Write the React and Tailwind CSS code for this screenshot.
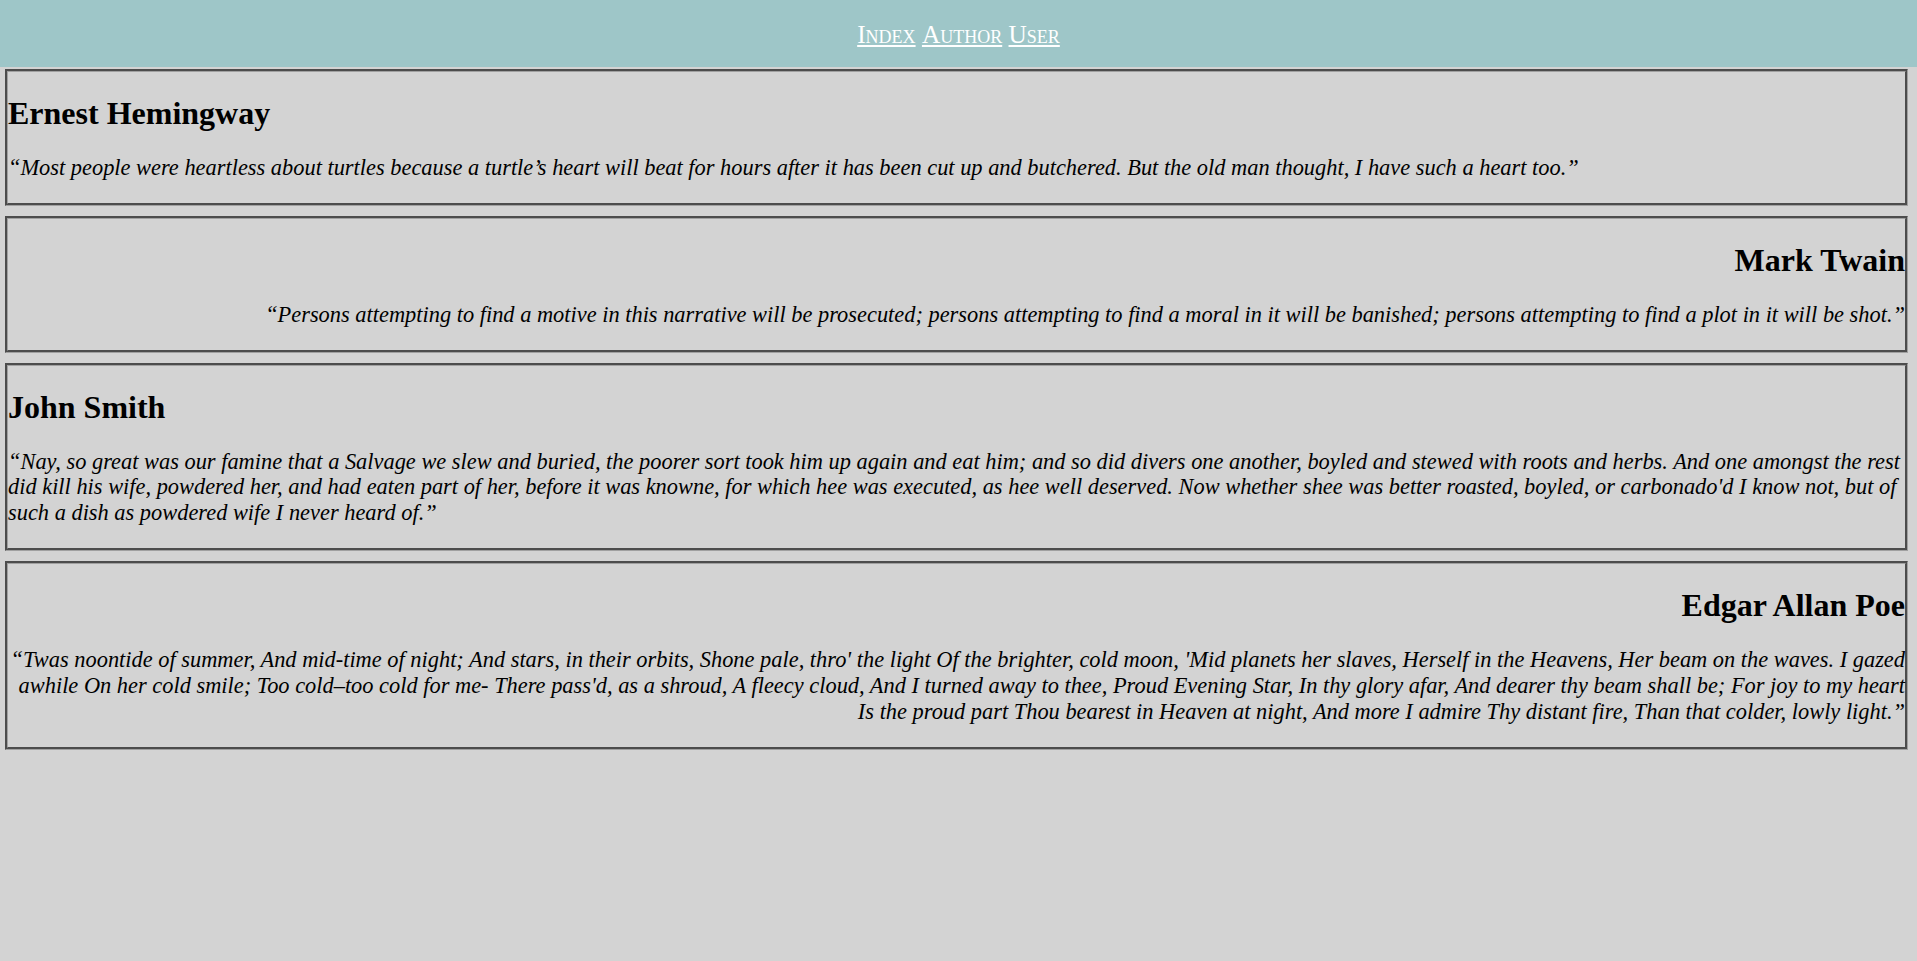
import React from "react";

const quotes = [
  {
    author: "Ernest Hemingway",
    align: "left",
    text: "“Most people were heartless about turtles because a turtle’s heart will beat for hours after it has been cut up and butchered. But the old man thought, I have such a heart too.”",
  },
  {
    author: "Mark Twain",
    align: "right",
    text: "“Persons attempting to find a motive in this narrative will be prosecuted; persons attempting to find a moral in it will be banished; persons attempting to find a plot in it will be shot.”",
  },
  {
    author: "John Smith",
    align: "left",
    text: "“Nay, so great was our famine that a Salvage we slew and buried, the poorer sort took him up again and eat him; and so did divers one another, boyled and stewed with roots and herbs. And one amongst the rest did kill his wife, powdered her, and had eaten part of her, before it was knowne, for which hee was executed, as hee well deserved. Now whether shee was better roasted, boyled, or carbonado'd I know not, but of such a dish as powdered wife I never heard of.”",
  },
  {
    author: "Edgar Allan Poe",
    align: "right",
    text: "“Twas noontide of summer, And mid-time of night; And stars, in their orbits, Shone pale, thro' the light Of the brighter, cold moon, 'Mid planets her slaves, Herself in the Heavens, Her beam on the waves. I gazed awhile On her cold smile; Too cold–too cold for me- There pass'd, as a shroud, A fleecy cloud, And I turned away to thee, Proud Evening Star, In thy glory afar, And dearer thy beam shall be; For joy to my heart Is the proud part Thou bearest in Heaven at night, And more I admire Thy distant fire, Than that colder, lowly light.”",
  },
];

export default function App() {
  return (
    <div className="min-h-[961px] bg-[#d3d3d3] text-black font-['Liberation_Serif','Times_New_Roman',serif]">
      <nav className="h-[67px] bg-[#9ec6c8] flex items-center justify-center pt-[2px] text-[25.3px] leading-[1.15] text-white [font-variant:small-caps] font-['Liberation_Serif','Times_New_Roman',serif]">
        <a href="#" className="underline decoration-[1.5px] underline-offset-[2px]">Index</a>
        <span>&nbsp;</span>
        <a href="#" className="underline decoration-[1.5px] underline-offset-[2px]">Author</a>
        <span>&nbsp;</span>
        <a href="#" className="underline decoration-[1.5px] underline-offset-[2px]">User</a>
      </nav>
      <div className="flex flex-col gap-[10px] pt-[2px] ml-[5px] mr-[9px]">
        {quotes.map((q) => (
          <section
            key={q.author}
            className={
              "border-[3px] [border-style:groove] border-[#a0a0a0] " +
              (q.align === "right" ? "text-right" : "text-left")
            }
          >
            <h2 className="text-[32px] leading-[1.15] font-bold mt-[23px] mb-[21.44px] font-['Liberation_Serif','Times_New_Roman',serif]">
              {q.author}
            </h2>
            <p className="text-[22.4px] leading-[1.15] italic mt-[23px] mb-[22.4px] font-['Liberation_Serif','Times_New_Roman',serif]">
              {q.text}
            </p>
          </section>
        ))}
      </div>
    </div>
  );
}
